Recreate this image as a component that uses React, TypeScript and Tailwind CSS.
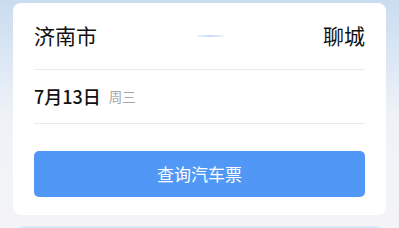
import React from 'react'

const App = () => {
  return (
    <div
      className="w-[399px] h-[228px] overflow-hidden bg-gradient-to-b from-[#c9dcf0] via-[#eef2f8] to-[#f4f4f7] pt-[3px]"
      style={{ fontFamily: '"Noto Sans CJK SC", "Noto Sans", sans-serif' }}
    >
      <div className="mx-[13px] rounded-[8px] bg-white px-[21px] pb-[18px]">
        {/* 出发 / 到达 */}
        <div className="flex h-[67px] items-center justify-between border-b border-[#ebebeb]">
          <span className="text-[21px] text-[#111]">济南市</span>
          <div className="h-[2px] w-[27px] rounded bg-gradient-to-r from-[#eef4fd] via-[#c8daf7] to-[#eef4fd]" />
          <span className="text-[21px] text-[#111]">聊城</span>
        </div>

        {/* 日期 */}
        <div className="flex h-[54px] items-center border-b border-[#ebebeb]">
          <span className="text-[18px] font-medium text-[#111]">7月13日</span>
          <span className="ml-[8px] text-[13.5px] text-[#a5a5a5]">周三</span>
        </div>

        <button className="mt-[27px] flex h-[46px] w-full items-center justify-center rounded-[5px] bg-[#5197f5] text-[17px] text-white">
          查询汽车票
        </button>
      </div>
      <div className="mx-[16px] mt-[11px] h-[10px] rounded-t-[8px] border-t-2 border-[#dbe8f7] bg-white" />
    </div>
  )
}

export default App
